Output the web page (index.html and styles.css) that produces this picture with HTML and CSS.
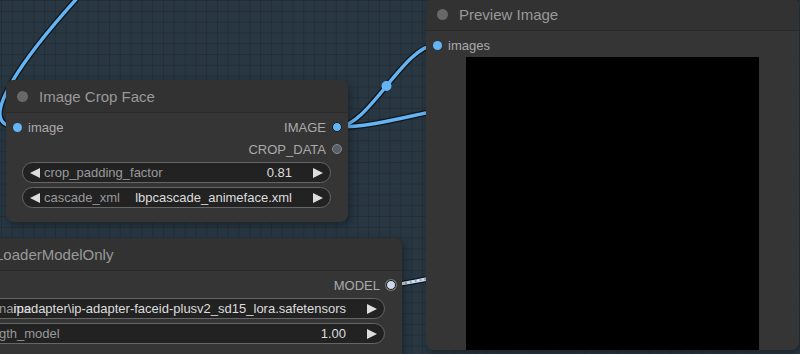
FILE: index.html
```html
<!DOCTYPE html>
<html lang="en">
<head>
    <meta charset="UTF-8">
    <meta name="viewport" content="width=device-width, initial-scale=1.0">
    <link rel="stylesheet" href="styles.css">
    <title>Image Crop Face</title>
</head>
<body>
    <div class="canvas">
        <!-- Links are drawn under the nodes -->
        <svg class="links" width="800" height="354" viewBox="0 0 800 354">
            <g class="link-outline">
                <path d="M 80 -5 C 30 50, -30 127, 17 127"/>
                <path d="M 337 127 C 369 127, 404 45, 436 45"/>
                <path d="M 337 127 C 370 127, 400 118, 440 110"/>
                <path d="M 390 285 C 405 284, 415 281, 432 278"/>
            </g>
            <g class="link-image">
                <path d="M 80 -5 C 30 50, -30 127, 17 127"/>
                <path d="M 337 127 C 369 127, 404 45, 436 45"/>
                <path d="M 337 127 C 370 127, 400 118, 440 110"/>
            </g>
            <path class="link-model" d="M 390 285 C 405 284, 415 281, 432 278"/>
            <path class="link-model-flow" d="M 390 285 C 405 284, 415 281, 432 278"/>
            <circle cx="386.5" cy="86" r="5" fill="#64b5f6"/>
        </svg>

        <!-- Image Crop Face -->
        <div class="node node-crop">
            <div class="node-title"><span class="title-dot"></span>Image Crop Face</div>
            <div class="node-body">
                <div class="slot-row">
                    <span class="slot-in"><i class="dot dot-image"></i>image</span>
                    <span class="slot-out">IMAGE<i class="dot dot-image linked"></i></span>
                </div>
                <div class="slot-row">
                    <span class="slot-out">CROP_DATA<i class="dot dot-data"></i></span>
                </div>
                <div class="widgets">
                    <div class="widget">
                        <svg class="arrow" viewBox="0 0 10 10"><polygon points="10,0 10,10 0,5"/></svg>
                        <div class="field">
                            <span class="label">crop_padding_factor</span>
                            <span class="value">0.81</span>
                        </div>
                        <svg class="arrow" viewBox="0 0 10 10"><polygon points="0,0 0,10 10,5"/></svg>
                    </div>
                    <div class="widget">
                        <svg class="arrow" viewBox="0 0 10 10"><polygon points="10,0 10,10 0,5"/></svg>
                        <div class="field">
                            <span class="label">cascade_xml</span>
                            <span class="value">lbpcascade_animeface.xml</span>
                        </div>
                        <svg class="arrow" viewBox="0 0 10 10"><polygon points="0,0 0,10 10,5"/></svg>
                    </div>
                </div>
            </div>
        </div>

        <!-- LoraLoaderModelOnly -->
        <div class="node node-lora">
            <div class="node-title"><span class="title-dot"></span>LoraLoaderModelOnly</div>
            <div class="node-body">
                <div class="slot-row">
                    <span class="slot-out">MODEL<i class="dot dot-model"></i></span>
                </div>
                <div class="widgets">
                    <div class="widget">
                        <svg class="arrow" viewBox="0 0 10 10"><polygon points="10,0 10,10 0,5"/></svg>
                        <div class="field">
                            <span class="label">lora_name</span>
                            <span class="value">ipadapter\ip-adapter-faceid-plusv2_sd15_lora.safetensors</span>
                        </div>
                        <svg class="arrow" viewBox="0 0 10 10"><polygon points="0,0 0,10 10,5"/></svg>
                    </div>
                    <div class="widget">
                        <svg class="arrow" viewBox="0 0 10 10"><polygon points="10,0 10,10 0,5"/></svg>
                        <div class="field">
                            <span class="label">strength_model</span>
                            <span class="value">1.00</span>
                        </div>
                        <svg class="arrow" viewBox="0 0 10 10"><polygon points="0,0 0,10 10,5"/></svg>
                    </div>
                </div>
            </div>
        </div>

        <!-- Preview Image -->
        <div class="node node-preview">
            <div class="node-title"><span class="title-dot"></span>Preview Image</div>
            <div class="node-body">
                <div class="slot-row">
                    <span class="slot-in"><i class="dot dot-image"></i>images</span>
                </div>
                <div class="preview"></div>
            </div>
        </div>
    </div>
</body>
</html>
```

FILE: styles.css
```css
/* Reset */
body {
    margin: 0;
    padding: 0;
    overflow: hidden;
}

/* Graph canvas with its grid */
.canvas {
    position: relative;
    width: 800px;
    height: 354px;
    overflow: hidden;
    background-color: #283742;
    background-image:
        linear-gradient(to right, rgba(0, 0, 0, 0.13) 1px, transparent 1px),
        linear-gradient(to bottom, rgba(0, 0, 0, 0.13) 1px, transparent 1px);
    background-size: 10.8px 10.8px;
    background-position: 1px 0;
    font-family: "Liberation Sans", Arial, sans-serif;
}

.links {
    position: absolute;
    top: 0;
    left: 0;
}

.link-outline path {
    fill: none;
    stroke: #121619;
    stroke-width: 6;
}

.link-image path {
    fill: none;
    stroke: #64b5f6;
    stroke-width: 3.4;
}

.link-model {
    fill: none;
    stroke: #d5e2f0;
    stroke-width: 3.4;
}

.link-model-flow {
    fill: none;
    stroke: #7fa8d8;
    stroke-width: 2;
    stroke-dasharray: 2 3;
}

/* Nodes sit on the canvas at their own places */
.node {
    position: absolute;
    background: #353535;
    border-radius: 8px;
    box-shadow: 2px 3px 8px rgba(0, 0, 0, 0.35);
    color: #aaa;
    font-size: 13px;
}

.node-crop {
    left: 6px;
    top: 80px;
    width: 342px;
}

.node-lora {
    left: -68px;
    top: 238px;
    width: 470px;
    height: 140px;
}

.node-preview {
    left: 426px;
    top: -2px;
    width: 373px;
}

.node-title {
    height: 32px;
    display: flex;
    align-items: center;
    gap: 11px;
    padding-left: 11px;
    background: #323232;
    border-bottom: 1px solid #2a2a2a;
    border-radius: 8px 8px 0 0;
    font-size: 15px;
    color: #999;
    white-space: nowrap;
}

.title-dot {
    width: 11px;
    height: 11px;
    border-radius: 50%;
    background: #686868;
    flex-shrink: 0;
}

.node-body {
    display: flex;
    flex-direction: column;
    padding-top: 3px;
}

/* Slot rows */
.slot-row {
    height: 22px;
    display: flex;
    align-items: center;
}

.slot-in {
    display: flex;
    align-items: center;
    gap: 6px;
    padding-left: 6px;
}

.slot-out {
    margin-left: auto;
    display: flex;
    align-items: center;
    gap: 6px;
    padding-right: 6px;
}

.dot {
    width: 10px;
    height: 10px;
    box-sizing: border-box;
    border-radius: 50%;
    flex-shrink: 0;
}

.dot-image {
    background: #64b5f6;
    width: 9px;
    height: 9px;
    margin: 0 0.5px;
}

.dot-image.linked {
    width: 10px;
    height: 10px;
    margin: 0;
    border: 1.5px solid #15191c;
}

.dot-data {
    background: #55606a;
    border: 1.5px solid #8a8a8a;
}

.dot-model {
    background: #c9d8ea;
    border: 1.5px solid #1c1c1c;
    box-shadow: 0 0 0 1px #777;
}

/* Widgets */
.widgets {
    display: flex;
    flex-direction: column;
    gap: 4px;
    padding: 2px 17px 14px 16px;
}

.widget {
    height: 21px;
    box-sizing: border-box;
    border: 1px solid #666;
    border-radius: 11px;
    background: #222;
    display: flex;
    align-items: center;
    padding: 0 7px;
}

.arrow {
    width: 10px;
    height: 10px;
    fill: #ddd;
    flex-shrink: 0;
}

.field {
    flex: 1;
    display: grid;
    grid-template-columns: minmax(0, 1fr);
    margin: 0 21px 0 4px;
    white-space: nowrap;
}

.field .label,
.field .value {
    grid-area: 1 / 1;
}

.label {
    justify-self: start;
    color: #999;
}

.value {
    justify-self: end;
    color: #ddd;
}

/* Preview image area */
.preview {
    align-self: center;
    width: 293px;
    height: 293px;
    margin-top: 1px;
    background: #000;
}
```
